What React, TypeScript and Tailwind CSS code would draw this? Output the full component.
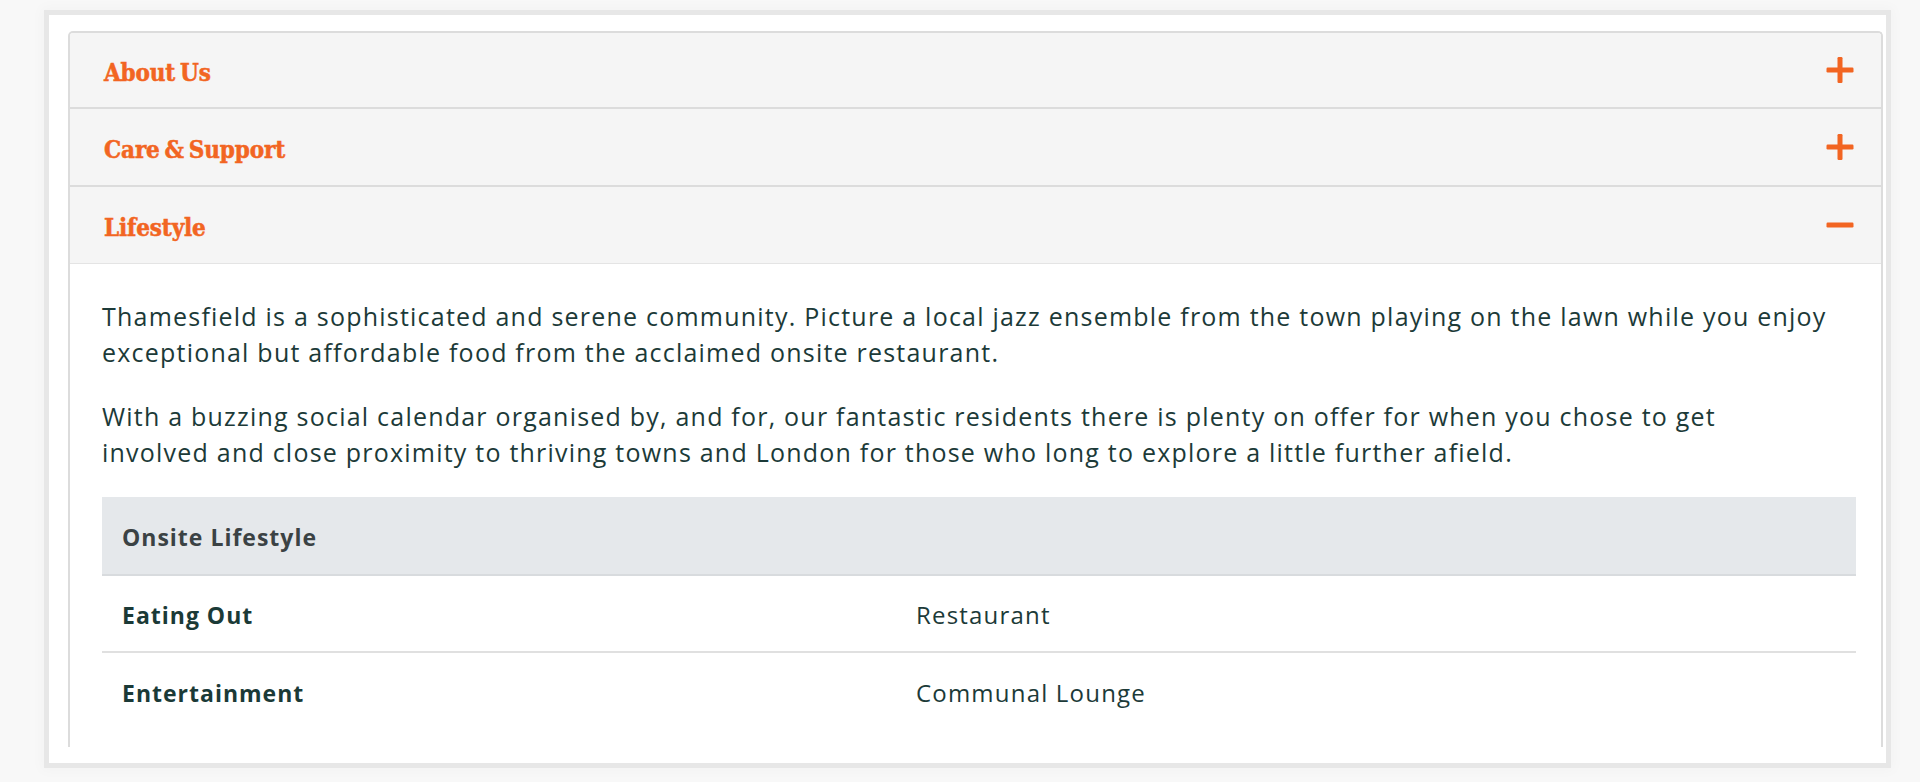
import React from "react";

const ORANGE = "#f26522";

function PlusIcon() {
  return (
    <svg width="28" height="28" viewBox="0 0 28 28" aria-hidden="true">
      <rect x="0.5" y="11.5" width="27" height="5" rx="1.2" fill={ORANGE} />
      <rect x="11.5" y="1" width="5" height="26" rx="1.2" fill={ORANGE} />
    </svg>
  );
}

function MinusIcon() {
  return (
    <svg width="28" height="28" viewBox="0 0 28 28" aria-hidden="true">
      <rect x="0.5" y="11.5" width="27" height="5" rx="1.2" fill={ORANGE} />
    </svg>
  );
}

const headingFont = {
  fontFamily: '"DejaVu Serif Condensed", "DejaVu Serif", serif',
};

function AccordionHeader({
  title,
  open,
  className,
}: {
  title: string;
  open?: boolean;
  className: string;
}) {
  return (
    <div
      className={`flex items-center justify-between bg-[#f5f5f5] pl-[34px] pr-[27px] ${className}`}
    >
      <span
        className="pt-[5px] text-[24px] font-bold tracking-[-0.15px] text-[#f26522] [word-spacing:-2.5px] [-webkit-text-stroke:0.5px_#f26522]"
        style={headingFont}
      >
        {title}
      </span>
      {open ? <MinusIcon /> : <PlusIcon />}
    </div>
  );
}

const rows = [
  { label: "Eating Out", value: "Restaurant" },
  { label: "Entertainment", value: "Communal Lounge" },
];

export default function App() {
  return (
    <div
      className="h-[782px] w-[1920px] overflow-hidden bg-[#f8f8f8] pl-[49px] pt-[15px]"
      style={{ fontFamily: '"Open Sans", "Noto Sans", sans-serif' }}
    >
      <div className="flex h-[748px] w-[1837px] flex-col bg-white pb-[16px] pl-[19px] pr-[3px] pt-[16px] shadow-[0_0_0_5px_#e7e7e7,0_0_12px_8px_rgba(0,0,0,0.025)]">
        <div className="flex-1 overflow-hidden rounded-t-[5px] border-x-2 border-t-2 border-[#dcdcdc]">
          <AccordionHeader title="About Us" className="h-[76px] border-b-2 border-[#dcdcdc]" />
          <AccordionHeader title="Care & Support" className="h-[78px] border-b-2 border-[#dcdcdc]" />
          <AccordionHeader title="Lifestyle" open className="h-[77px] border-b border-[#e4e4e4]" />

          <div className="pl-[32px] pr-[25px] pt-[34px] text-[#1c3a38]">
            <div className="text-[25px] leading-[36px] tracking-[1.22px]">
              <p className="mb-[28px]">
                Thamesfield is a sophisticated and serene community. Picture a local jazz ensemble
                from the town playing on the lawn while you enjoy
                <br />
                exceptional but affordable food from the acclaimed onsite restaurant.
              </p>
              <p>
                With a buzzing social calendar organised by, and for, our fantastic residents there
                is plenty on offer for when you chose to get
                <br />
                involved and close proximity to thriving towns and London for those who long to
                explore a little further afield.
              </p>
            </div>

            <div className="mt-[27px]">
              <div className="flex h-[79px] items-center border-b-2 border-[#d8dbde] bg-[#e5e8eb] pl-[20px] pt-[3px]">
                <span className="text-[23px] font-bold tracking-[1px] text-[#3b4244]">
                  Onsite Lifestyle
                </span>
              </div>
              {rows.map((r, i) => (
                <div
                  key={r.label}
                  className={
                    i === 0
                      ? "flex h-[77px] items-center border-b-2 border-[#e0e0e0] pt-[3px]"
                      : "flex h-[77px] items-center pt-[3px]"
                  }
                >
                  <div className="w-[814px] pl-[20px] text-[23px] font-bold tracking-[1px] text-[#1b3a37]">
                    {r.label}
                  </div>
                  <div className="text-[24px] tracking-[1.2px] text-[#1c3a38]">{r.value}</div>
                </div>
              ))}
            </div>
          </div>
        </div>
      </div>
    </div>
  );
}
